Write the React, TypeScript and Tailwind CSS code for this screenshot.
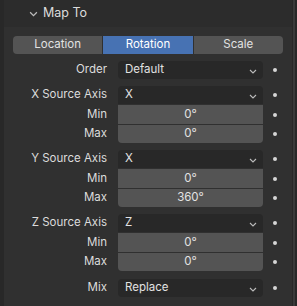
import type { ReactNode } from 'react'

const font = { fontFamily: 'Inter, "Noto Sans", sans-serif' }

function Chevron({ className = '', w = 8, h = 5 }: { className?: string; w?: number; h?: number }) {
  return (
    <svg width={w} height={h} viewBox="0 0 8 5" className={className}>
      <path d="M1 1 L4 4 L7 1" fill="none" stroke="currentColor" strokeWidth="1.1" />
    </svg>
  )
}

function Dot() {
  return (
    <div className="w-[23px] flex justify-center">
      <div className="w-[4px] h-[4px] rounded-full bg-[#d6d6d6]" />
    </div>
  )
}

function Row({ label, children, h = 'h-[18px]' }: { label?: string; children: ReactNode; h?: string }) {
  return (
    <div className={`flex items-center ${h}`}>
      <div className="w-[104px] pr-[1px] text-right text-[11.5px] text-[#dcdcdc] leading-none">{label}</div>
      <div className="ml-[10px] w-[145px] h-full">{children}</div>
      <Dot />
    </div>
  )
}

function Select({ value, rounded = 'rounded-[4px]' }: { value: string; rounded?: string }) {
  return (
    <div className={`h-full bg-[#282828] ${rounded} flex items-center pl-[7px] pr-[6px] text-[11.5px] text-[#e2e2e2]`}>
      <span className="flex-1">{value}</span>
      <Chevron className="text-[#bcbcbc] mt-[2px]" />
    </div>
  )
}

function Num({ value, rounded = '' }: { value: string; rounded?: string }) {
  return (
    <div className={`h-full bg-[#545454] ${rounded} flex items-center justify-center text-[11.5px] text-[#e2e2e2]`}>
      {value}
    </div>
  )
}

function AxisGroup({ axis, src, min, max }: { axis: string; src: string; min: string; max: string }) {
  return (
    <div className="flex flex-col gap-[1px] mt-[7px]">
      <Row label={`${axis} Source Axis`}>
        <Select value={src} rounded="rounded-t-[4px]" />
      </Row>
      <Row label="Min" h="h-[19px]">
        <Num value={min} />
      </Row>
      <Row label="Max">
        <Num value={max} rounded="rounded-b-[4px]" />
      </Row>
    </div>
  )
}

export default function App() {
  return (
    <div className="w-[297px] h-[306px] bg-[#282828] flex overflow-hidden" style={font}>
      <div className="ml-[4px] w-[288px] h-full bg-[#303030] flex flex-col">
        <div className="h-[27px] bg-[#2c2c2c] flex items-center pl-[25px] text-[12.5px] text-[#dcdcdc]">
          <Chevron className="text-[#bcbcbc] mr-[5px]" w={9} h={6} />
          <span>Map To</span>
        </div>
        <div className="mt-[9px] ml-[9px] w-[270px] h-[18px] flex text-[11.5px]">
          <div className="flex-1 bg-[#545454] rounded-l-[4px] flex items-center justify-center text-[#e2e2e2]">Location</div>
          <div className="flex-1 ml-[1px] bg-[#4772b3] flex items-center justify-center text-white">Rotation</div>
          <div className="flex-1 ml-[1px] bg-[#545454] rounded-r-[4px] flex items-center justify-center text-[#e2e2e2]">Scale</div>
        </div>
        <div className="mt-[7px]">
          <Row label="Order">
            <Select value="Default" />
          </Row>
        </div>
        <AxisGroup axis="X" src="X" min="0°" max="0°" />
        <AxisGroup axis="Y" src="X" min="0°" max="360°" />
        <AxisGroup axis="Z" src="Z" min="0°" max="0°" />
        <div className="mt-[8px]">
          <Row label="Mix">
            <Select value="Replace" />
          </Row>
        </div>
      </div>
      <div className="ml-[1px] w-[2px] h-full bg-[#3a3a3a]" />
    </div>
  )
}
